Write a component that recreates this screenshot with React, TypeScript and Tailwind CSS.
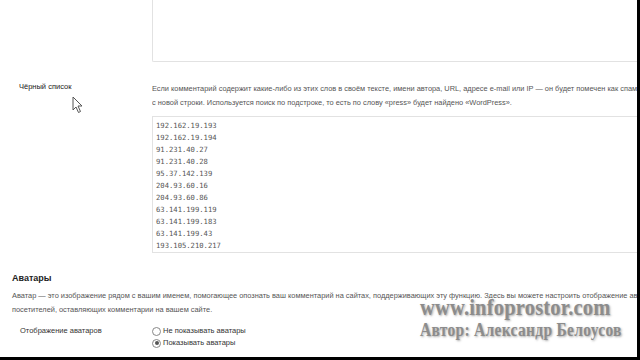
import React from "react";

const ips = [
  "192.162.19.193",
  "192.162.19.194",
  "91.231.40.27",
  "91.231.40.28",
  "95.37.142.139",
  "204.93.60.16",
  "204.93.60.86",
  "63.141.199.119",
  "63.141.199.183",
  "63.141.199.43",
  "193.105.210.217",
];

function Cursor() {
  return (
    <svg width="12" height="18" viewBox="0 0 12 18" className="absolute left-[72px] top-[96px]">
      <path d="M1 1 L1 14 L4 11 L6.5 16.5 L8.5 15.5 L6 10 L10 10 Z" fill="#fff" stroke="#555" strokeWidth="1" strokeLinejoin="round" />
    </svg>
  );
}

function Radio({ checked }: { checked?: boolean }) {
  return (
    <span className="inline-flex w-[9px] h-[9px] rounded-full border border-[#888] items-center justify-center mr-[2px] bg-white">
      {checked && <span className="w-[4px] h-[4px] rounded-full bg-[#555]" />}
    </span>
  );
}

export default function App() {
  return (
    <div
      className="relative w-[640px] h-[360px] overflow-hidden bg-white text-[#333]"
      style={{ fontFamily: '"Liberation Sans", Arial, sans-serif' }}
    >
      <div className="absolute right-0 top-0 w-[3px] h-full bg-black z-20" />
      <div className="absolute left-0 bottom-0 h-[3px] w-full bg-black z-20" />

      {/* top textarea (cropped) */}
      <div className="ml-[152px] h-[62px] border-l border-b border-[#e2e2e2] rounded-bl-[2px]" />

      {/* blacklist row */}
      <div className="flex mt-[20px]">
        <div className="w-[152px] shrink-0 pl-[19px] -mt-[2px] text-[7.5px] text-[#222] leading-[14px]">Чёрный список</div>
        <div className="flex-1 min-w-0 overflow-hidden">
          <div className="text-[7.4px] leading-[14px] whitespace-nowrap text-[#555]">
            <div>Если комментарий содержит какие-либо из этих слов в своём тексте, имени автора, URL, адресе e-mail или IP — он будет помечен как спам.</div>
            <div>с новой строки. Используется поиск по подстроке, то есть по слову «press» будет найдено «WordPress».</div>
          </div>
          <div
            className="mt-[6px] h-[137px] border border-[#e2e2e2] pt-[3px] pl-[3px] text-[7.2px] leading-[12px] text-[#555]"
            style={{ fontFamily: '"DejaVu Sans Mono", "Liberation Mono", monospace' }}
          >
            {ips.map((ip) => (
              <div key={ip}>{ip}</div>
            ))}
          </div>
        </div>
      </div>

      {/* avatars */}
      <div className="pl-[12px] mt-[18px] text-[9px] font-bold text-[#222] leading-[14px]">Аватары</div>
      <div className="pl-[12px] mt-[4px] text-[7.4px] leading-[14px] whitespace-nowrap text-[#555] overflow-hidden">
        <div>Аватар — это изображение рядом с вашим именем, помогающее опознать ваш комментарий на сайтах, поддерживающих эту функцию. Здесь вы можете настроить отображение ав</div>
        <div>посетителей, оставляющих комментарии на вашем сайте.</div>
      </div>
      <div className="flex mt-[8px]">
        <div className="w-[152px] shrink-0 pl-[20px] text-[7.5px] leading-[12px] text-[#333]">Отображение аватаров</div>
        <div className="text-[7.5px] leading-[12px] text-[#333]">
          <div className="flex items-center"><Radio />Не показывать аватары</div>
          <div className="flex items-center"><Radio checked />Показывать аватары</div>
        </div>
      </div>

      {/* watermark */}
      <div
        className="absolute left-[420px] top-[296px] z-10 text-[#8c8c8c] font-bold leading-none whitespace-nowrap"
        style={{ fontFamily: '"Liberation Serif", "Times New Roman", serif', textShadow: "1px 1px 2px #a8a8a8, -1px -1px 0 #ffffff" }}
      >
        <div className="text-[20.5px] tracking-[0.2px] scale-y-[1.12] origin-top-left">www.infoprostor.com</div>
        <div className="text-[15.5px] tracking-[0.3px] mt-[3px] scale-y-[1.22] origin-top-left">Автор: Александр Белоусов</div>
      </div>

      <Cursor />
    </div>
  );
}
